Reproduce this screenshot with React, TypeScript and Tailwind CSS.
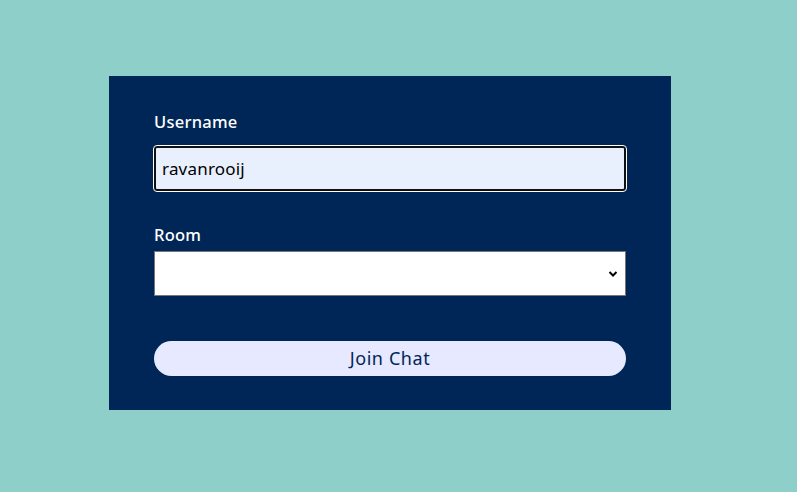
import { useState } from 'react';

const Chevron = () => (
  <svg
    className="pointer-events-none absolute right-[8px] top-1/2 -translate-y-1/2"
    width="10"
    height="7"
    viewBox="0 0 10 7"
    fill="none"
  >
    <path d="M1.5 1.5 L5 5 L8.5 1.5" stroke="#000" strokeWidth="2" />
  </svg>
);

const JoinForm = () => {
  const [username, setUsername] = useState('ravanrooij');
  const [room, setRoom] = useState('');

  return (
    <form
      className="w-[562px] bg-[#002657] px-[45px] pt-[34px] pb-[34px] font-['Noto_Sans',sans-serif]"
      onSubmit={(e) => e.preventDefault()}
    >
      <label htmlFor="username" className="block text-[16.5px] font-medium leading-6 tracking-[0.25px] text-white">
        Username
      </label>
      <input
        id="username"
        value={username}
        onChange={(e) => setUsername(e.target.value)}
        className="mt-3 block h-[45px] w-full rounded-[3px] border-2 border-[#101010] bg-[#e8f0fe] px-[6px] text-[17px] tracking-[0.2px] text-black outline outline-1 outline-white"
      />

      <label htmlFor="room" className="mt-8 block text-[16.5px] font-medium leading-6 tracking-[0.25px] text-white">
        Room
      </label>
      <div className="relative mt-1">
        <select
          id="room"
          value={room}
          onChange={(e) => setRoom(e.target.value)}
          className="block h-[45px] w-full appearance-none border border-[#767676] bg-white px-2 text-[16px] text-black"
        >
          <option value=""></option>
          <option value="javascript">JavaScript</option>
          <option value="python">Python</option>
        </select>
        <Chevron />
      </div>

      <button
        type="submit"
        className="mt-[45px] block h-[35px] w-full rounded-full bg-[#e6e9ff] text-[18px] tracking-[0.6px] text-[#002657]"
      >
        Join Chat
      </button>
    </form>
  );
};

export default function App() {
  return (
    <div className="min-h-screen bg-[#8ecfca] pl-[109px] pt-[76px]">
      <JoinForm />
    </div>
  );
}
